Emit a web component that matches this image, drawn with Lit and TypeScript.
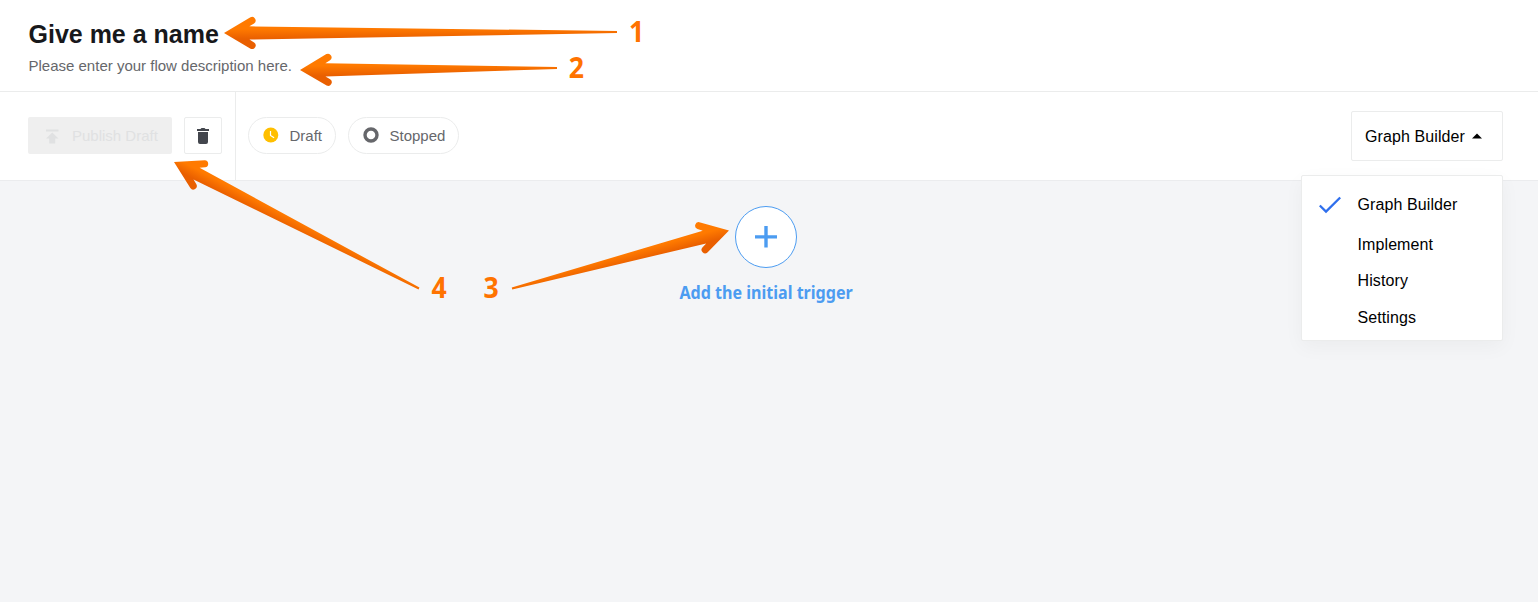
import { LitElement, html, css, svg } from "lit";
import { customElement } from "lit/decorators.js";

interface Arrow {
  tip: [number, number];
  tail: [number, number];
}

const ARROWS: Arrow[] = [
  { tip: [224, 33], tail: [617, 32] },
  { tip: [300, 70], tail: [557, 68] },
  { tip: [729, 230.5], tail: [512, 288.5] },
  { tip: [174, 162], tail: [419, 288.5] },
];

const NUMBERS = [
  { n: "1", x: 629, y: 42 },
  { n: "2", x: 568.8, y: 78 },
  { n: "3", x: 483.6, y: 298 },
  { n: "4", x: 431.5, y: 298 },
];

const MENU = ["Graph Builder", "Implement", "History", "Settings"];

@customElement("app-root")
export class AppRoot extends LitElement {
  static styles = css`
    :host {
      display: flex;
      flex-direction: column;
      position: relative;
      height: 602px;
      overflow: hidden;
      background: #f4f5f7;
      font-family: "Liberation Sans", Arial, sans-serif;
      color: #000;
    }
    * {
      box-sizing: border-box;
    }
    .header {
      height: 92px;
      padding: 18px 28.5px 0;
      background: #fff;
      border-bottom: 1px solid #ebecec;
    }
    .title {
      margin: 0;
      font-size: 25px;
      line-height: 32px;
      font-weight: 700;
      color: #17181b;
      white-space: nowrap;
    }
    .desc {
      margin: 6px 0 0;
      font-size: 15px;
      line-height: 20px;
      color: #66676b;
      white-space: nowrap;
    }
    .toolbar {
      display: flex;
      height: 89px;
      background: #fff;
      border-bottom: 1px solid #ebecee;
    }
    .actions {
      display: flex;
      gap: 12px;
      width: 236px;
      height: 88px;
      padding: 25px 0 0 28px;
      border-right: 1px solid #ebecec;
    }
    .publish {
      display: flex;
      align-items: center;
      width: 144px;
      height: 37px;
      padding-left: 17px;
      gap: 12px;
      border-radius: 2px;
      background: #efefef;
      color: #e0e1e2;
      font-size: 15px;
      white-space: nowrap;
    }
    .trash {
      display: flex;
      align-items: center;
      justify-content: center;
      width: 38px;
      height: 37px;
      border: 1px solid #ebecec;
      border-radius: 2px;
    }
    .chips {
      display: flex;
      flex: 1;
      gap: 12px;
      padding: 25px 0 0 12px;
    }
    .chip {
      display: flex;
      align-items: center;
      height: 37px;
      padding: 0 13px 0 14px;
      gap: 10.5px;
      border: 1px solid #ebecec;
      border-radius: 19px;
      font-size: 15px;
      color: #66676b;
      white-space: nowrap;
    }
    .chip svg {
      margin-bottom: 2px;
    }
    .picker {
      display: flex;
      align-items: center;
      width: 152px;
      height: 50px;
      margin: 19px 35px 0 0;
      padding: 1px 0 0 13px;
      gap: 7px;
      border: 1px solid #ebecec;
      border-radius: 2px;
      font-size: 16px;
      letter-spacing: 0.1px;
      white-space: nowrap;
    }
    .picker svg {
      margin-bottom: 2px;
    }
    svg {
      display: block;
      flex: none;
    }
    .canvas {
      display: flex;
      flex: 1;
      flex-direction: column;
      align-items: center;
      padding: 25px 6px 0 0;
    }
    .add {
      display: flex;
      align-items: center;
      justify-content: center;
      width: 62px;
      height: 62px;
      border: 1px solid #4c9cf1;
      border-radius: 50%;
      background: #fff;
    }
    .add-label {
      margin-top: 11px;
      font-family: "Noto Sans", "Open Sans", sans-serif;
      font-size: 18px;
      font-weight: 700;
      line-height: 26px;
      color: #4c9cf1;
      white-space: nowrap;
      transform: scaleX(0.893);
    }
    .menu {
      position: absolute;
      top: 175px;
      right: 35px;
      width: 202px;
      height: 166px;
      padding-top: 8px;
      background: #fff;
      border: 1px solid #ebecec;
      border-radius: 2px;
      box-shadow: 0 6px 20px rgba(0, 0, 0, 0.04);
    }
    .item {
      display: flex;
      align-items: center;
      height: 36.5px;
      padding-left: 55.5px;
      font-size: 16px;
      letter-spacing: 0.1px;
      white-space: nowrap;
    }
    .item.selected {
      height: 42.5px;
      padding-left: 17px;
      gap: 16.5px;
    }
    .item.selected svg {
      margin-bottom: 1px;
    }
    .notes {
      position: absolute;
      left: 0;
      top: 0;
      pointer-events: none;
    }
    .num {
      font: 700 29px "Open Sans", "Noto Sans", sans-serif;
      fill: #ff7300;
    }
  `;

  private arrow(a: Arrow) {
    const dx = a.tail[0] - a.tip[0];
    const dy = a.tail[1] - a.tip[1];
    const len = Math.hypot(dx, dy);
    const flip = dx < 0;
    const angle = (Math.atan2(flip ? -dy : dy, flip ? -dx : dx) * 180) / Math.PI;
    return svg`<path
      transform="translate(${a.tip[0]} ${a.tip[1]}) rotate(${angle}) scale(${flip ? -1 : 1} 1)"
      fill="url(#shade)"
      d="M0 0L26.5 -15.7A3.6 3.6 0 0 1 30.1 -9.5L25.4 -6.6L${len} -1V1L25.4 6.6L30.1 9.5A3.6 3.6 0 0 1 26.5 15.7Z"/>`;
  }

  render() {
    return html`
      <header class="header">
        <h1 class="title">Give me a name</h1>
        <p class="desc">Please enter your flow description here.</p>
      </header>
      <div class="toolbar">
        <div class="actions">
          <div class="publish">
            <svg width="15" height="16" viewBox="0 0 15 16" fill="#e0e1e2">
              <path d="M1 1.500h12.500v2H1zM7.250 4.500L13.500 10.500h-3.250v5h-6v-5H1z" />
            </svg>
            <span>Publish Draft</span>
          </div>
          <div class="trash">
            <svg width="12" height="16" viewBox="0 0 12 16" fill="#43464d">
              <path d="M0 1h3.500l1-1h3l1 1H12v2H0zM1 4h10v10q0 2-2 2H3q-2 0-2-2z" />
            </svg>
          </div>
        </div>
        <div class="chips">
          <div class="chip">
            <svg width="16" height="16" viewBox="0 0 16 16">
              <circle cx="7.800" cy="8" r="7.500" fill="#ffbf00" />
              <path d="M7.500 4v4.500l3.600 2.200" fill="none" stroke="#fff" stroke-width="1.200" />
            </svg>
            <span>Draft</span>
          </div>
          <div class="chip">
            <svg width="16" height="16" viewBox="0 0 16 16">
              <circle cx="8" cy="8" r="6" fill="none" stroke="#66676b" stroke-width="3.400" />
            </svg>
            <span>Stopped</span>
          </div>
        </div>
        <div class="picker">
          <span>Graph Builder</span>
          <svg width="10" height="6" viewBox="0 0 10 6"><path d="M0 5.500L5 .5l5 5z" /></svg>
        </div>
      </div>
      <main class="canvas">
        <div class="add">
          <svg width="22" height="22" viewBox="0 0 22 22" fill="#4c9cf1">
            <path d="M9.300 0h3.400v9.300H22v3.200H12.700V21.500h-3.400V12.500H0v-3.200h9.300z" />
          </svg>
        </div>
        <div class="add-label">Add the initial trigger</div>
      </main>
      <div class="menu">
        ${MENU.map((m, i) =>
          i === 0
            ? html`<div class="item selected">
                <svg width="22" height="18" viewBox="0 0 22 18" fill="none" stroke="#2f6fed" stroke-width="2.300">
                  <path d="M.8 9.500L7 15.600L21.200 1.500" />
                </svg>
                <span>${m}</span>
              </div>`
            : html`<div class="item">${m}</div>`
        )}
      </div>
      <svg class="notes" width="1538" height="602" viewBox="0 0 1538 602">
        <defs>
          <linearGradient id="shade" gradientUnits="userSpaceOnUse" x1="0" y1="-4" x2="0" y2="6">
            <stop offset="0" stop-color="#ff7a00" />
            <stop offset="1" stop-color="#e95f00" />
          </linearGradient>
        </defs>
        ${ARROWS.map((a) => this.arrow(a))}
        ${NUMBERS.map(
          (t) => svg`<text class="num" transform="translate(${t.x} ${t.y}) scale(0.92 1)">${t.n}</text>`
        )}
      </svg>
    `;
  }
}
